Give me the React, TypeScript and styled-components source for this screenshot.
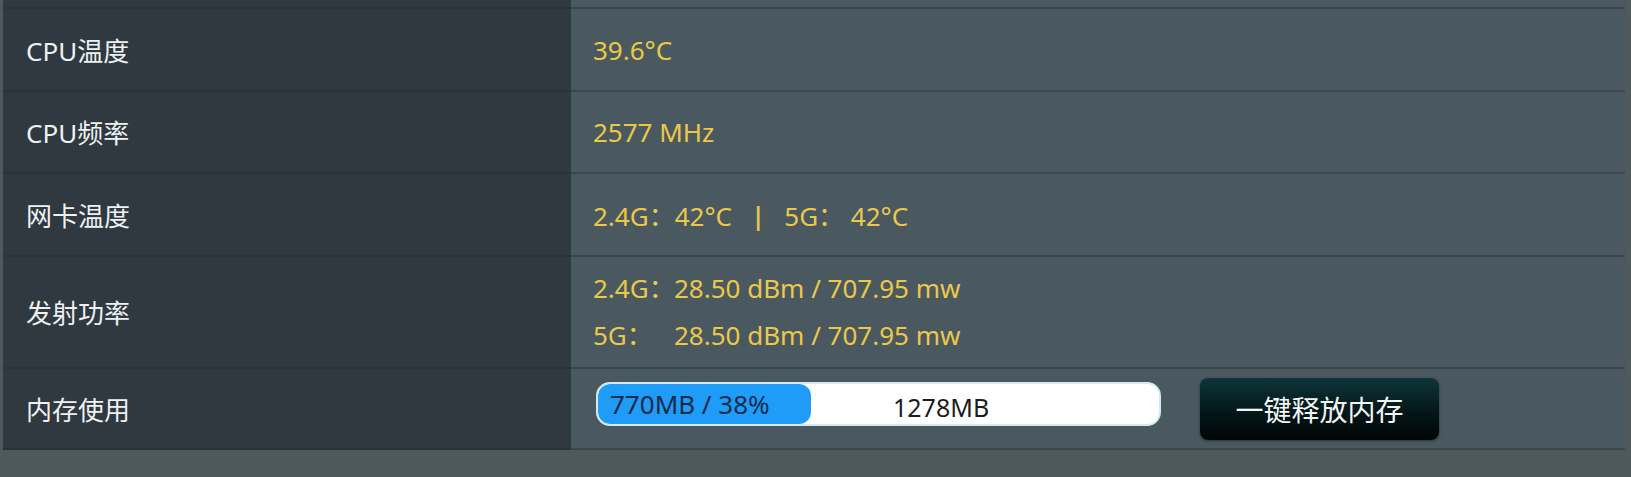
import styled, { createGlobalStyle } from 'styled-components';

const GlobalStyle = createGlobalStyle`
    html, body {
        margin: 0;
        padding: 0;
        background: #4e595c;
    }
    body {
        font-family: "Noto Sans", "Noto Sans CJK SC", sans-serif;
    }
`;

const Page = styled.div`
    width: 1631px;
    height: 477px;
    box-sizing: border-box;
    padding: 0 6px 0 3px;
    background: #4e595c;
    overflow: hidden;
`;

const Table = styled.div`
    display: flex;
    flex-direction: column;
`;

const Row = styled.div<{ $height: number; $first?: boolean; $last?: boolean }>`
    display: grid;
    grid-template-columns: 568px 1fr;
    height: ${({ $height }) => $height}px;

    & > div {
        border-top: ${({ $first }) => ($first ? 'none' : '2px solid')};
        border-bottom: ${({ $last }) => ($last ? '2px solid' : 'none')};
    }
`;

const LabelCell = styled.div`
    box-sizing: border-box;
    display: flex;
    align-items: center;
    padding-left: 23px;
    background: #2f393f;
    border-color: #2a3339 !important;
    color: #eef1f2;
    font-size: 26px;
    font-family: "Noto Sans", "Noto Sans CJK SC", sans-serif;
`;

const ValueCell = styled.div<{ $stack?: boolean }>`
    box-sizing: border-box;
    display: flex;
    flex-direction: ${({ $stack }) => ($stack ? 'column' : 'row')};
    justify-content: ${({ $stack }) => ($stack ? 'center' : 'flex-start')};
    align-items: ${({ $stack }) => ($stack ? 'flex-start' : 'center')};
    padding-left: 22px;
    background: #4a5960;
    border-color: #3c474c !important;
    color: #ecc84a;
    font-size: 26px;
    white-space: pre;
`;

const Line = styled.div`
    line-height: 47px;
`;

const BandKey = styled.span`
    display: inline-block;
    width: 81px;
`;

const Sep = styled.span`
    margin: 0 19px;
    font-weight: 600;
`;

const MemoryBar = styled.div`
    position: relative;
    box-sizing: border-box;
    width: 565px;
    height: 44px;
    margin: 0 0 9px 3px;
    background: #ffffff;
    border: 2px solid #d4e9f5;
    border-radius: 14px;
    overflow: hidden;
`;

const MemoryFill = styled.div`
    box-sizing: border-box;
    height: 100%;
    display: flex;
    align-items: center;
    padding-left: 12px;
    background: #1f9cf7;
    border-radius: 12px;
    color: #142b4c;
    font-size: 26px;
    white-space: nowrap;
`;

const MemoryTotal = styled.span`
    position: absolute;
    left: 295px;
    top: 3px;
    color: #1c1c1c;
    font-size: 25px;
    line-height: 40px;
`;

const FreeButton = styled.button`
    margin-left: 39px;
    width: 239px;
    height: 62px;
    border: none;
    border-radius: 8px;
    background: linear-gradient(to bottom, #0d3538 0%, #041416 60%, #010606 100%);
    box-shadow: 0 1px 3px rgba(0, 0, 0, 0.45);
    color: #f2f5f5;
    font-size: 28px;
    font-family: "Noto Sans CJK SC", "Noto Sans", sans-serif;
    cursor: pointer;
`;

const used_mb = 770;
const total_mb = 1278;

export default function App() {
    const pct = Math.round((used_mb / 2048) * 100);

    return (
        <>
            <GlobalStyle />
            <Page>
                <Table>
                    <Row $height={7} $first>
                        <LabelCell />
                        <ValueCell />
                    </Row>
                    <Row $height={83}>
                        <LabelCell>CPU温度</LabelCell>
                        <ValueCell>39.6°C</ValueCell>
                    </Row>
                    <Row $height={82}>
                        <LabelCell>CPU频率</LabelCell>
                        <ValueCell>2577 MHz</ValueCell>
                    </Row>
                    <Row $height={83}>
                        <LabelCell>网卡温度</LabelCell>
                        <ValueCell>
                            2.4G：42°C<Sep>|</Sep>5G： 42°C
                        </ValueCell>
                    </Row>
                    <Row $height={112}>
                        <LabelCell>发射功率</LabelCell>
                        <ValueCell $stack>
                            <Line><BandKey>2.4G：</BandKey>28.50 dBm / 707.95 mw</Line>
                            <Line><BandKey>5G：</BandKey>28.50 dBm / 707.95 mw</Line>
                        </ValueCell>
                    </Row>
                    <Row $height={83} $last>
                        <LabelCell>内存使用</LabelCell>
                        <ValueCell>
                            <MemoryBar>
                                <MemoryFill style={{ width: `${pct}%` }}>
                                    {used_mb}MB / {pct}%
                                </MemoryFill>
                                <MemoryTotal>{total_mb}MB</MemoryTotal>
                            </MemoryBar>
                            <FreeButton>一键释放内存</FreeButton>
                        </ValueCell>
                    </Row>
                </Table>
            </Page>
        </>
    );
}
